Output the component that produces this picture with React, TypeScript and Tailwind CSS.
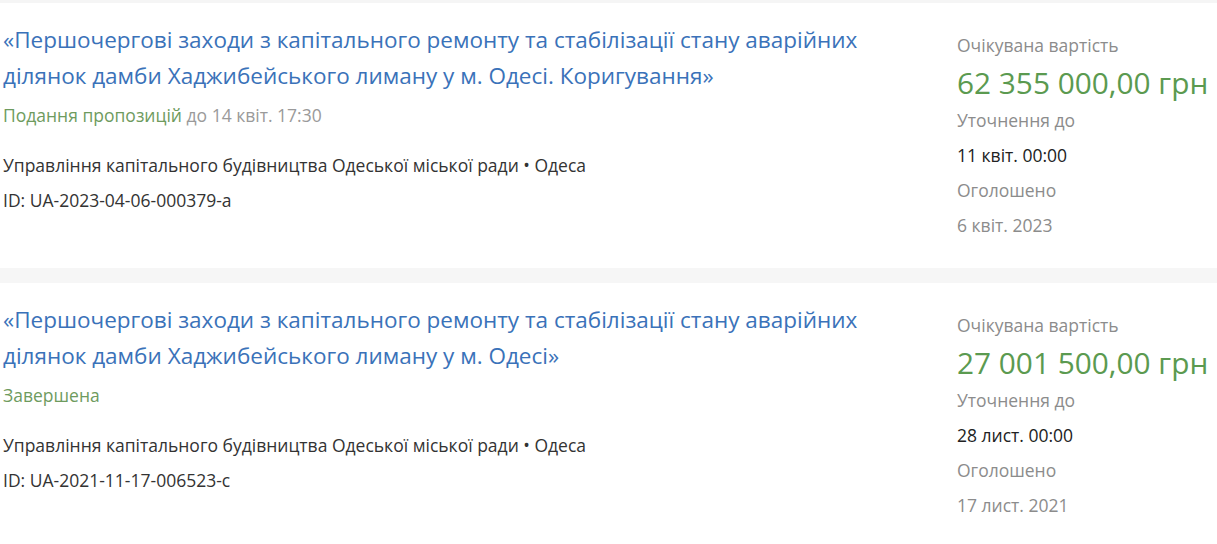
type Tender = {
  title: string
  status: string
  statusNote?: string
  org: string
  id: string
  amount: string
  enquiryTill: string
  published: string
}

const TENDERS: Tender[] = [
  {
    title:
      '«Першочергові заходи з капітального ремонту та стабілізації стану аварійних ділянок дамби Хаджибейського лиману у м. Одесі. Коригування»',
    status: 'Подання пропозицій',
    statusNote: 'до 14 квіт. 17:30',
    org: 'Управління капітального будівництва Одеської міської ради • Одеса',
    id: 'UA-2023-04-06-000379-a',
    amount: '62 355 000,00 грн',
    enquiryTill: '11 квіт. 00:00',
    published: '6 квіт. 2023'
  },
  {
    title:
      '«Першочергові заходи з капітального ремонту та стабілізації стану аварійних ділянок дамби Хаджибейського лиману у м. Одесі»',
    status: 'Завершена',
    org: 'Управління капітального будівництва Одеської міської ради • Одеса',
    id: 'UA-2021-11-17-006523-c',
    amount: '27 001 500,00 грн',
    enquiryTill: '28 лист. 00:00',
    published: '17 лист. 2021'
  }
]

function TenderCard({ tender }: { tender: Tender }) {
  return (
    <div className="flex bg-white pt-[19px] pb-[25px]">
      {/* Left - title & meta */}
      <div className="flex-1 pl-[3px] pr-[40px]">
        <a href="#" className="block text-[22.5px] leading-[36px] text-[#3a72b9] max-w-[900px]">
          {tender.title}
        </a>
        <div className="mt-[4px] text-[17.5px] leading-[35px]">
          <span className="text-[#6e9b5e]">{tender.status}</span>
          {tender.statusNote && <span className="text-[#9a9a9a]"> {tender.statusNote}</span>}
        </div>
        <div className="mt-[15px] text-[17.5px] leading-[35px] text-[#333333]">{tender.org}</div>
        <div className="text-[17.5px] leading-[35px] text-[#333333]">ID: {tender.id}</div>
      </div>

      {/* Right - value & dates */}
      <div className="w-[260px] shrink-0 mt-[6px]">
        <div className="text-[17.5px] leading-[35px] text-[#8c8c8c]">Очікувана вартість</div>
        <div className="text-[29.8px] leading-[40px] text-[#5b9a50] whitespace-nowrap">{tender.amount}</div>
        <div className="text-[17.5px] leading-[35px] text-[#8c8c8c]">Уточнення до</div>
        <div className="text-[17.5px] leading-[35px] text-[#222222]">{tender.enquiryTill}</div>
        <div className="text-[17.5px] leading-[35px] text-[#8c8c8c]">Оголошено</div>
        <div className="text-[17.5px] leading-[35px] text-[#8c8c8c]">{tender.published}</div>
      </div>
    </div>
  )
}

export default function App() {
  return (
    <div className="min-h-screen bg-white font-['Open_Sans',sans-serif]">
      <div className="h-[3px] bg-[#f5f5f5]" />
      {TENDERS.map((t, idx) => (
        <div key={t.id}>
          {idx > 0 && <div className="h-[15px] bg-[#f6f6f6]" />}
          <TenderCard tender={t} />
        </div>
      ))}
    </div>
  )
}
